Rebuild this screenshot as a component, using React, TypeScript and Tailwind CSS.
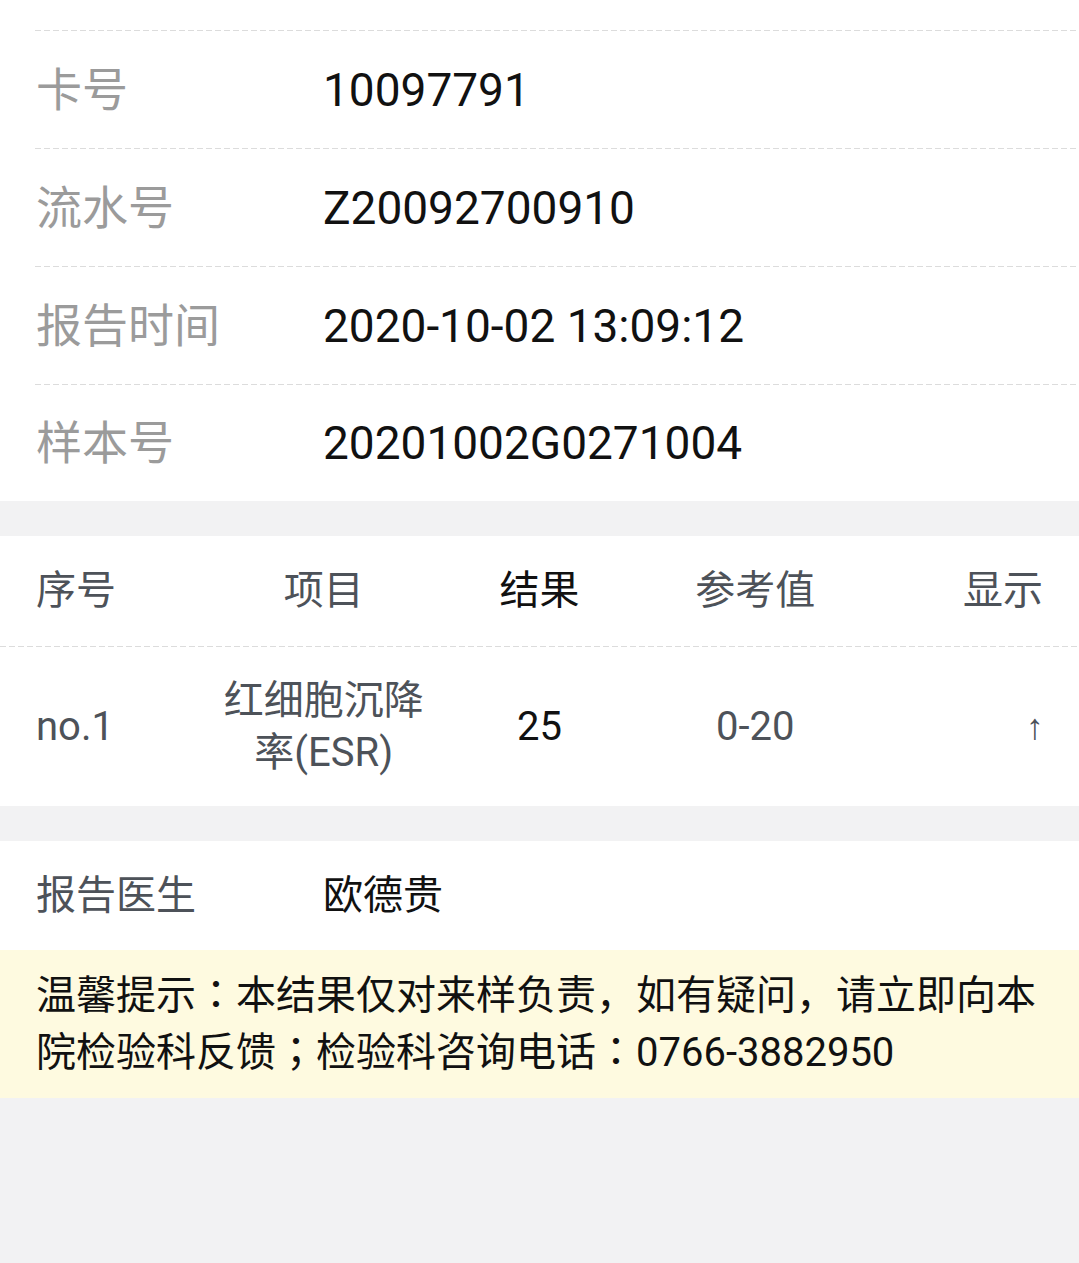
import React from "react";

const font = { fontFamily: '"Roboto", "Noto Sans CJK SC", sans-serif' };
const jp = { fontFamily: '"Noto Sans CJK JP", sans-serif' };

function Dash({ inset = true }: { inset?: boolean }) {
  return (
    <div
      className={`h-px ${inset ? "ml-[35px]" : ""} bg-[linear-gradient(to_right,#dcdcdc_6px,transparent_6px)] bg-[length:9px_1px] bg-repeat-x`}
    />
  );
}

function InfoRow({ label, value, h = "h-[117px]" }: { label: string; value: string; h?: string }) {
  return (
    <div className={`flex items-center ${h} pl-[36px]`}>
      <div className="w-[287px] shrink-0 text-[46px] text-[#9b9b9b]">{label}</div>
      <div className="text-[46px] text-[#111]">{value}</div>
    </div>
  );
}

function P({ c }: { c: string }) {
  return (
    <span className="leading-none" style={jp}>
      {c}
    </span>
  );
}

export default function App() {
  return (
    <div className="min-h-[1263px] w-[1079px] bg-[#f2f2f3] leading-none" style={font}>
      {/* top info */}
      <div className="bg-white">
        <div className="h-[30px]" />
        <Dash />
        <InfoRow label="卡号" value="10097791" />
        <Dash />
        <InfoRow label="流水号" value="Z20092700910" />
        <Dash />
        <InfoRow label="报告时间" value="2020-10-02 13:09:12" />
        <Dash />
        <InfoRow label="样本号" value="20201002G0271004" h="h-[116px]" />
      </div>

      <div className="h-[35px]" />

      {/* table */}
      <div className="bg-white">
        <div className="grid h-[110px] grid-cols-5 items-center text-[40px]">
          <div className="pl-[36px] text-left text-[#4d5259]">序号</div>
          <div className="text-center text-[#4d5259]">项目</div>
          <div className="text-center text-[#111]">结果</div>
          <div className="text-center text-[#4d5259]">参考值</div>
          <div className="pr-[36px] text-right text-[#4d5259]">显示</div>
        </div>
        <Dash inset={false} />
        <div className="grid h-[159px] grid-cols-5 items-center text-[40px]">
          <div className="pl-[36px] text-left text-[#4d5259]">no.1</div>
          <div className="px-[6px] text-center leading-[52px] text-[#4d5259]">红细胞沉降率(ESR)</div>
          <div className="text-center text-[#111]">25</div>
          <div className="text-center text-[#4d5259]">0-20</div>
          <div className="pr-[35px] text-right font-['Liberation_Sans',sans-serif] text-[36px] text-[#4d5259]">↑</div>
        </div>
      </div>

      <div className="h-[35px]" />

      {/* doctor */}
      <div className="flex h-[109px] items-center bg-white pl-[36px]">
        <div className="w-[287px] shrink-0 text-[40px] text-[#4d5259]">报告医生</div>
        <div className="text-[40px] text-[#111]">欧德贵</div>
      </div>

      {/* tip */}
      <div className="bg-[#fefae0] px-[36px] py-[17px] text-[40px] leading-[57px] text-[#111]">
        温馨提示<P c="：" />本结果仅对来样负责<P c="，" />如有疑问<P c="，" />请立即向本院检验科反馈<P c="；" />检验科咨询电话<P c="：" />0766-3882950
      </div>
    </div>
  );
}
